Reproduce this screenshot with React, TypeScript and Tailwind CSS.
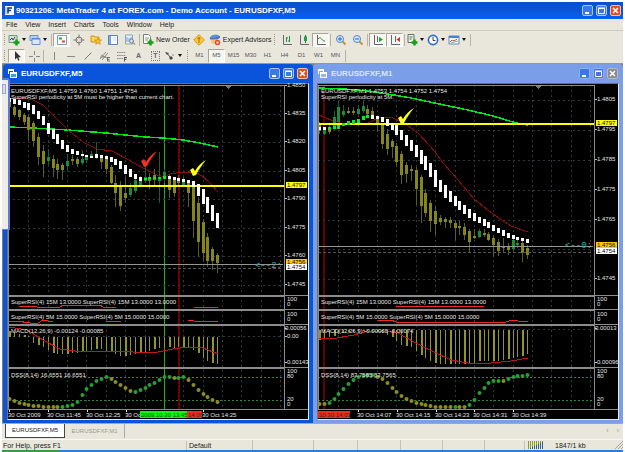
import type { ReactNode } from 'react';
import clsx from 'clsx';

type Range = [number, number];
type Point = [number, number];

interface Candle {
  body: Range;
  wick: Range;
  up?: boolean;
}

interface AxisLabel {
  y: number;
  text: string;
  mark?: 'yellow' | 'amber' | 'white';
}

interface ChartData {
  grid: number[];
  price: AxisLabel[];
  header: string;
  note: string;
  trend: Range[];
  trendUp: number[];
  candles: Candle[];
  average: Point[];
  band: Point[];
  level: number;
  bid: number[];
  marker: { y: number; text: string };
  ticks: { x: number; y: number; color: string }[];
  vlines: { x: number; width: number; color: string }[];
  rsi15: Point[][];
  rsi5: Point[][];
  macd: { text: string; zero: number; bars: number[]; signal: Point[]; labels: AxisLabel[] };
  dss: { text: string; dots: number[]; up: number[] };
  times: { x: number; text: string }[];
  timeMarks: { x: number; width: number; text: string; color: string }[];
}

const STEP = 4.84;
const barX = (i: number) => Math.round(1 + i * STEP);
const c = (b0: number, b1: number, w0 = b0, w1 = b1, up = false): Candle => ({ body: [b0, b1], wick: [w0, w1], up });

const m5: ChartData = {
  grid: [29, 57, 86, 114, 143, 171, 200],
  price: [
    { y: 1, text: '1.4850' },
    { y: 29, text: '1.4835' },
    { y: 57, text: '1.4820' },
    { y: 86, text: '1.4805' },
    { y: 114, text: '1.4790' },
    { y: 143, text: '1.4775' },
    { y: 171, text: '1.4760' },
    { y: 200, text: '1.4745' },
    { y: 101, text: '1.4797', mark: 'yellow' },
    { y: 178, text: '1.4756', mark: 'amber' },
    { y: 183, text: '1.4754', mark: 'white' },
  ],
  header: 'EURUSDFXF,M5  1.4759 1.4760 1.4751 1.4754',
  note: 'SuperRSI periodicity at 5M must be higher than current chart.',
  trend: [
    [13, 17], [14, 19], [15, 20], [17, 23], [18, 25], [20, 29], [26, 34], [31, 40], [38, 49], [44, 54], [49, 59],
    [55, 64], [60, 67], [64, 69], [66, 70], [69, 71], [70, 72], [71, 73], [69, 73], [70, 73], [71, 74], [72, 77],
    [74, 80], [76, 84], [80, 89], [84, 92], [89, 94], [92, 96], [93, 95], [92, 94], [92, 94], [92, 94], [91, 94],
    [91, 94], [92, 95], [93, 96], [94, 97], [95, 98], [96, 102], [99, 111], [104, 119], [112, 128], [120, 136], [128, 143],
  ],
  trendUp: [28, 29, 30, 31, 32],
  candles: [
    c(16, 22), c(22, 30, 20, 32), c(25, 32, 24, 35), c(30, 37, 28, 40), c(32, 45, 30, 55), c(38, 56, 36, 62),
    c(52, 72, 48, 80), c(66, 79, 60, 92), c(72, 76, 64, 80, true), c(74, 83, 70, 92), c(79, 85, 74, 94), c(80, 85, 78, 95),
    c(76, 81, 69, 85, true), c(74, 76, 70, 80), c(74, 79, 72, 82), c(74, 78, 65, 80, true), c(72, 75, 70, 78, true),
    c(69, 71, 66, 73, true), c(70, 72, 57, 74, true), c(72, 77, 70, 84), c(74, 84, 72, 89), c(82, 98, 80, 99),
    c(98, 108, 90, 122), c(102, 121, 96, 126), c(108, 113, 92, 118), c(103, 110, 98, 112, true), c(95, 106, 92, 108, true),
    c(95, 100, 91, 102, true), c(92, 96, 78, 98, true), c(94, 96, 88, 104), c(90, 95, 84, 100), c(93, 96, 67, 118, true),
    c(87, 94, 84, 98, true), c(92, 105, 90, 113), c(95, 108, 92, 112), c(94, 98, 90, 101), c(95, 100, 92, 102, true),
    c(97, 108, 96, 122), c(102, 136, 100, 153), c(118, 157, 112, 172), c(137, 168, 134, 175), c(152, 176, 148, 182),
    c(164, 176, 162, 185), c(170, 178, 168, 188),
  ],
  average: [[1, 42], [25, 43], [60, 45], [98, 48], [137, 52], [156, 53], [175, 55], [192, 58], [210, 62]],
  band: [
    [4, 14], [15, 13], [25, 15], [35, 20], [49, 34], [60, 45], [75, 57], [89, 64], [104, 66], [119, 74], [135, 83],
    [149, 90], [157, 92], [162, 89], [175, 87], [187, 87], [194, 91], [201, 97], [210, 107],
  ],
  level: 101,
  bid: [179, 183],
  marker: { y: 183, text: '<--2:' },
  ticks: [
    { x: 133, y: 66, color: '#f03020' },
    { x: 182, y: 75, color: '#ffff20' },
  ],
  vlines: [
    { x: 156, width: 1, color: '#1fae1f' },
    { x: 170, width: 2, color: '#700000' },
  ],
  rsi15: [
    [[11, 221], [22, 221], [29, 222], [52, 222], [55, 220], [92, 220], [95, 222], [108, 222]],
    [[186, 222], [196, 222], [210, 222]],
  ],
  rsi5: [
    [[1, 237], [9, 236], [22, 238], [30, 238], [35, 235], [45, 237]],
    [[98, 236], [113, 237]],
    [[180, 235], [192, 237], [210, 236]],
  ],
  macd: {
    text: 'MACD(12,26,9) -0.00124 -0.00085',
    zero: 252,
    bars: [
      246, 247, 249, 250, 251, 258, 260, 262, 265, 268, 269, 269, 269, 268, 268, 267, 266, 265, 264, 264, 266, 267,
      269, 271, 271, 270, 269, 268, 267, 266, 264, 263, 262, 262, 263, 262, 262, 262, 265, 268, 273, 276, 278, 279,
    ],
    signal: [[1, 242], [19, 245], [35, 255], [52, 264], [75, 267], [102, 266], [125, 267], [145, 268], [165, 264], [179, 262], [195, 263], [210, 269]],
    labels: [
      { y: 244, text: '0.00056' },
      { y: 252, text: '0.00' },
      { y: 278, text: '-0.00143' },
    ],
  },
  dss: {
    text: 'DSS(8,14) 16.6551 16.6551',
    dots: [
      314, 316, 318, 319, 320, 321, 321, 322, 322, 322, 322, 322, 321, 320, 317, 310, 304, 300, 296, 294, 292, 294,
      297, 300, 303, 306, 307, 305, 303, 300, 298, 295, 292, 292, 293, 293, 292, 295, 300, 305, 309, 312, 315, 317,
    ],
    up: [11, 12, 13, 14, 15, 16, 17, 18, 19, 20, 26, 27, 28, 29, 30, 31, 32, 33, 35, 36],
  },
  times: [
    { x: 0, text: '30 Oct 2009' },
    { x: 39, text: '30 Oct 11:45' },
    { x: 78, text: '30 Oct 12:25' },
    { x: 117, text: '30 Oct' },
    { x: 194, text: '30 Oct 14:25' },
  ],
  timeMarks: [
    { x: 132, width: 47, text: '2009.10.30 13:45', color: '#00ff00' },
    { x: 179, width: 15, text: '14:00', color: '#ee2c24' },
  ],
};

const m1: ChartData = {
  grid: [15, 45, 75, 105, 135, 164, 194],
  price: [
    { y: 15, text: '1.4805' },
    { y: 45, text: '1.4795' },
    { y: 75, text: '1.4785' },
    { y: 105, text: '1.4775' },
    { y: 135, text: '1.4765' },
    { y: 194, text: '1.4745' },
    { y: 39, text: '1.4797', mark: 'yellow' },
    { y: 161, text: '1.4756', mark: 'amber' },
    { y: 167, text: '1.4754', mark: 'white' },
  ],
  header: 'EURUSDFXF,M1  1.4753 1.4754 1.4752 1.4754',
  note: 'SuperRSI periodicity at 5M.',
  trend: [
    [42, 45], [42, 45], [42, 45], [41, 44], [40, 44], [38, 41], [36, 40], [35, 39], [34, 38], [31, 35], [30, 33],
    [30, 34], [31, 34], [32, 37], [34, 41], [38, 45], [40, 50], [45, 55], [50, 61], [55, 66], [60, 72], [65, 79],
    [71, 85], [78, 92], [85, 102], [95, 107], [100, 113], [106, 117], [111, 121], [116, 125], [120, 129], [124, 133],
    [128, 136], [132, 138], [134, 141], [137, 143], [140, 146], [143, 148], [145, 151], [148, 153], [150, 154],
    [152, 155], [153, 156], [154, 158],
  ],
  trendUp: [2, 3, 4, 5, 6, 7, 8, 9, 10],
  candles: [
    c(40, 46, 37, 49), c(45, 49, 42, 50, true), c(43, 47, 39, 49), c(32, 42, 26, 45, true), c(22, 37, 16, 39, true),
    c(26, 30, 20, 32, true), c(26, 28, 22, 29), c(26, 28, 22, 30), c(24, 29, 20, 30, true), c(21, 26, 16, 28, true),
    c(24, 29, 20, 30), c(26, 31, 22, 34), c(34, 38, 32, 47), c(40, 59, 38, 64), c(49, 64, 44, 70), c(56, 62, 54, 73),
    c(61, 77, 58, 82), c(69, 90, 66, 99), c(80, 89, 77, 98), c(84, 86, 80, 96), c(85, 104, 82, 120), c(92, 121, 90, 138),
    c(108, 128, 104, 132), c(118, 136, 115, 147), c(126, 139, 122, 150), c(133, 137, 130, 140), c(134, 137, 132, 143),
    c(135, 138, 132, 143), c(138, 143, 135, 155), c(141, 143, 136, 150), c(142, 150, 138, 155), c(146, 157, 144, 168),
    c(151, 153, 144, 154), c(146, 152, 144, 153, true), c(148, 150, 144, 152), c(149, 155, 147, 156), c(153, 160, 150, 172),
    c(157, 166, 154, 171), c(161, 163, 153, 167), c(162, 165, 158, 170), c(155, 164, 151, 166, true),
    c(158, 160, 154, 163, true), c(158, 168, 155, 177), c(163, 170, 160, 174),
  ],
  average: [[1, 3], [26, 4], [50, 6], [76, 10], [93, 13], [126, 20], [150, 25], [175, 31], [198, 38], [210, 40]],
  band: [
    [1, 30], [13, 35], [30, 40], [50, 38], [60, 33], [73, 32], [86, 38], [100, 48], [113, 62], [126, 79], [140, 95],
    [156, 114], [175, 129], [193, 141], [210, 147],
  ],
  level: 39,
  bid: [161, 167],
  marker: { y: 163, text: '<--0:' },
  ticks: [{ x: 80, y: 23, color: '#ffff20' }],
  vlines: [{ x: 5, width: 2, color: '#600000' }],
  rsi15: [[[78, 221], [93, 221], [106, 221], [166, 222], [210, 222]]],
  rsi5: [[[60, 235], [73, 235], [78, 237], [160, 237], [186, 238], [193, 235], [200, 236], [210, 236]]],
  macd: {
    text: 'MACD(12,26,9) -0.00065 -0.00074',
    zero: 245,
    bars: [
      255, 253, 252, 251, 249, 248, 247, 247, 246, 246, 246, 246, 246, 248, 250, 252, 256, 260, 261, 262, 266, 270,
      273, 276, 278, 279, 279, 279, 279, 279, 279, 279, 278, 276, 276, 276, 276, 276, 275, 274, 273, 272, 271, 269,
    ],
    signal: [[1, 253], [13, 254], [36, 250], [50, 246], [65, 246], [80, 248], [96, 257], [116, 267], [133, 275], [150, 278], [173, 278], [193, 276], [210, 273]],
    labels: [
      { y: 244, text: '0.00013' },
      { y: 278, text: '-0.00096' },
    ],
  },
  dss: {
    text: 'DSS(8,14) 83.7565 83.7565',
    dots: [
      319, 319, 318, 314, 309, 304, 299, 295, 292, 291, 290, 290, 292, 294, 298, 303, 307, 311, 314, 316, 318, 319,
      320, 321, 322, 322, 322, 322, 322, 322, 322, 320, 315, 308, 303, 298, 296, 296, 296, 294, 292, 291, 291, 290,
    ],
    up: [2, 3, 4, 5, 6, 7, 8, 9, 10, 11, 28, 31, 32, 33, 34, 35, 36, 37, 39, 40, 41, 42, 43],
  },
  times: [
    { x: 39, text: '30 Oct 14:07' },
    { x: 78, text: '30 Oct 14:15' },
    { x: 117, text: '30 Oct 14:23' },
    { x: 155, text: '30 Oct 14:31' },
    { x: 194, text: '30 Oct 14:39' },
  ],
  timeMarks: [{ x: 0, width: 32, text: '10:30 14:01', color: '#ee2c24' }],
};

const toPoints = (pts: Point[]) => pts.map(p => p.join(',')).join(' ');

interface PaneProps {
  top: number;
  className: string;
  data: ChartData;
  axis: ReactNode;
  children: ReactNode;
}

// All panes of a chart share one coordinate space; `top` is where this pane starts in it.
function Pane({ top, className, data, axis, children }: PaneProps) {
  return (
    <div className={clsx('flex', className)}>
      <div className="min-w-0 flex-1 border-x border-t border-[#8c8c8c]">
        <svg className="block h-full w-full" shapeRendering="crispEdges">
          <g transform={`translate(-1 ${-top})`}>
            {Array.from({ length: 14 }, (_, k) => (
              <line key={k} x1={barX((k + 1) * 4) + 0.5} x2={barX((k + 1) * 4) + 0.5} y1="0" y2="330" stroke="#30373e" strokeDasharray="2 3" />
            ))}
            {data.vlines.map(v => (
              <rect key={v.x} x={v.x} y="0" width={v.width} height="330" fill={v.color} />
            ))}
            {children}
          </g>
        </svg>
      </div>
      <svg className="block h-full w-[23px] shrink-0 overflow-visible">
        <g transform={`translate(0 ${-top})`} fill="#e4e4e4" fontSize="6">
          {axis}
        </g>
      </svg>
    </div>
  );
}

const markColor = { yellow: '#ffff00', amber: '#ffc800', white: '#ffffff' };

function AxisText({ y, text, mark }: AxisLabel) {
  return (
    <>
      {mark ? <rect x="1" y={y - 3} width="21" height="6" fill={markColor[mark]} /> : <rect x="0" y={y} width="2" height="1" fill="#bbb" />}
      <text x={text.length > 6 ? 0 : 2} y={y + 2} fill={mark ? '#000' : '#e4e4e4'}>{text}</text>
    </>
  );
}

function RsiPane({ top, base, className, label, lines, data }: { top: number; base: number; className: string; label: string; lines: Point[][]; data: ChartData }) {
  return (
    <Pane
      top={top}
      className={className}
      data={data}
      axis={
        <>
          <text x="2" y={base - 2}>100</text>
          <text x="2" y={base + 3}>0</text>
        </>
      }
    >
      {lines.map((l, i) => (
        <polyline key={i} points={toPoints(l)} fill="none" stroke="#f02a20" />
      ))}
      <text x="3" y={base} fill="#e4e4e4" fontSize="6">{label}</text>
    </Pane>
  );
}

function Chart({ data }: { data: ChartData }) {
  const { macd, dss } = data;
  return (
    <div className="bg-black pt-px font-['Liberation_Sans',sans-serif]">
      <Pane top={1} className="h-[210px]" data={data} axis={data.price.map(p => <AxisText key={p.text} {...p} />)}>
        {data.grid.map(y => (
          <line key={y} x1="0" x2="100%" y1={y + 0.5} y2={y + 0.5} stroke="#30373e" strokeDasharray="2 3" />
        ))}
        <polyline points={toPoints(data.average)} fill="none" stroke="#00e818" strokeWidth="1.5" />
        <polyline points={toPoints(data.band)} fill="none" stroke="#8c0c0c" />
        {data.candles.map((k, i) => {
          const color = k.up ? '#1f8a38' : '#85851f';
          return (
            <g key={i}>
              <rect x={barX(i)} y={k.wick[0]} width="1" height={k.wick[1] - k.wick[0]} fill={k.up ? '#1d5c40' : '#5c5c28'} />
              <rect x={barX(i) - 1} y={k.body[0]} width="3" height={k.body[1] - k.body[0]} fill={color} />
            </g>
          );
        })}
        {data.bid.map((y, i) => (
          <line key={y} x1="0" x2="100%" y1={y + 0.5} y2={y + 0.5} stroke={i ? '#555' : '#96968c'} strokeDasharray={i ? '3 2' : undefined} />
        ))}
        <rect x="0" y={data.level - 1} width="101%" height="2" fill="#ffff00" />
        {data.trend.map(([a, b], i) => (
          <rect key={i} x={barX(i) - 1} y={a} width="3" height={b - a} fill={data.trendUp.includes(i) ? '#00f020' : '#fff'} />
        ))}
        {data.ticks.map(t => (
          <path key={t.x} transform={`translate(${t.x} ${t.y})`} d="M0 10 L3 8 L5 11 C8 6 11 3 16 0 C12 5 9 9 6 15 L3 16 Z" fill={t.color} shapeRendering="auto" />
        ))}
        <path d="M217 1 h6 l-3 3 z" fill="#777" />
        <g fontSize="6" fill="#e4e4e4">
          <text x="3" y="8">{data.header}</text>
          <text x="3" y="14">{data.note}</text>
        </g>
        <text x="247" y={data.marker.y} fontSize="9" fill="#2cb4b4" fontFamily="Liberation Mono, monospace">{data.marker.text}</text>
      </Pane>
      <RsiPane top={212} base={219} className="h-[14px] border-t border-[#8c8c8c]" label="SuperRSI(4) 15M 13.0000  SuperRSI(4) 15M 13.0000 13.0000" lines={data.rsi15} data={data} />
      <RsiPane top={226} base={234} className="h-[15px] border-t border-[#8c8c8c]" label="SuperRSI(4) 5M 15.0000  SuperRSI(4) 5M 15.0000 15.0000" lines={data.rsi5} data={data} />
      <Pane top={241} className="h-[43px] border-t border-[#8c8c8c]" data={data} axis={macd.labels.map(l => <AxisText key={l.text} {...l} />)}>
        <line x1="0" x2="100%" y1={macd.zero - 0.5} y2={macd.zero - 0.5} stroke="#30373e" strokeDasharray="2 3" />
        {macd.bars.map((y, i) => (
          <rect key={i} x={barX(i)} y={Math.min(y, macd.zero)} width={i % 3 ? 1 : 2} height={Math.abs(y - macd.zero)} fill="#94942e" />
        ))}
        <polyline points={toPoints(macd.signal)} fill="none" stroke="#c01818" />
        <text x="3" y="248" fill="#e4e4e4" fontSize="6">{macd.text}</text>
      </Pane>
      <Pane
        top={284}
        className="h-[42px] border-t border-[#8c8c8c]"
        data={data}
        axis={
          <>
            <text x="2" y="289">100</text>
            <text x="2" y="294">80</text>
            <text x="2" y="317">20</text>
            <text x="2" y="322">0</text>
          </>
        }
      >
        {[292, 315].map(y => (
          <line key={y} x1="0" x2="100%" y1={y + 0.5} y2={y + 0.5} stroke="#2f8a2f" strokeDasharray="2 2" />
        ))}
        {dss.dots.map((y, i) => (
          <circle key={i} cx={barX(i) + 0.5} cy={y} r="2" fill={dss.up.includes(i) ? '#2a9c3a' : '#8c8c26'} shapeRendering="auto" />
        ))}
        <text x="3" y="292" fill="#e4e4e4" fontSize="6">{dss.text}</text>
      </Pane>
      <svg className="block h-[10px] w-full border-t border-[#8c8c8c]" fontSize="6">
        {data.times.map(t => (
          <g key={t.x} fill="#e4e4e4">
            <rect x={t.x + 1} y="0" width="1" height="2" />
            <text x={t.x} y="7">{t.text}</text>
          </g>
        ))}
        {data.timeMarks.map(t => (
          <g key={t.x}>
            <rect x={t.x} y="1" width={t.width} height="7" fill={t.color} />
            <text x={t.x + 1} y="7" fill="#1c2c10">{t.text}</text>
          </g>
        ))}
      </svg>
    </div>
  );
}

function CaptionButtons({ muted = false }: { muted?: boolean }) {
  const base = 'flex size-[11px] items-center justify-center rounded-[2px] border';
  return (
    <div className="flex gap-[3px]">
      <button aria-label="Minimize" className={clsx(base, 'bg-[#3b78e6]', muted ? 'border-[#8fb0f0]' : 'border-[#a8c4f8]')}>
        <svg className="size-[9px]" viewBox="0 0 9 9"><path d="M2 6h4v2H2z" fill="#fff" /></svg>
      </button>
      <button aria-label="Maximize" className={clsx(base, 'bg-[#3b78e6]', muted ? 'border-[#8fb0f0]' : 'border-[#a8c4f8]')}>
        <svg className="size-[9px]" viewBox="0 0 9 9"><path d="M1.5 2.5h6v5h-6zM1 2h7" fill="none" stroke="#fff" /></svg>
      </button>
      <button aria-label="Close" className={clsx(base, muted ? 'border-[#b8b8c0] bg-[#8e8e92]' : 'border-[#f4c0a8] bg-[#e0501e]')}>
        <svg className="size-[9px]" viewBox="0 0 9 9"><path d="M2 2l5 5M7 2l-5 5" stroke="#fff" strokeWidth="1.5" /></svg>
      </button>
    </div>
  );
}

function ChartWindow({ title, active = false, data }: { title: string; active?: boolean; data: ChartData }) {
  return (
    <section className={clsx('min-w-0 rounded-t-[4px] px-1 pb-[3px]', active ? 'bg-[#0a54dc]' : 'bg-[#7a9ee8]')}>
      <header className="flex h-[19px] items-center pr-px">
        <svg className="mr-1 ml-px size-[9px] shrink-0" viewBox="0 0 9 9">
          <path d="M0 0h6v2H0zM0 2h1v3H0zM5 2h1v1H5z" fill="#fff" />
          <path d="M2 3h7v6H2z" fill="#fff" />
          <path d="M3 5h5v3H3z" fill={active ? '#5a90ea' : '#9bb6ee'} />
        </svg>
        <h2 className={clsx('flex-1 truncate text-[8px] leading-[10px] font-bold', active ? 'text-white' : 'text-[#dce6fa]')}>{title}</h2>
        <CaptionButtons muted={!active} />
      </header>
      <div className="border border-t-[#707070] border-r-[#e8e8e0] border-b-[#e8e8e0] border-l-[#707070]">
        <Chart data={data} />
      </div>
    </section>
  );
}

function Icon({ children }: { children: ReactNode }) {
  return <svg className="size-3 shrink-0" viewBox="0 0 12 12" fill="none">{children}</svg>;
}

const plus = <path d="M5.5 8.5h6M8.5 5.500v6" stroke="#16a016" strokeWidth="2.500" />;

const icons: Record<string, ReactNode> = {
  newChart: <><path d="M1 1.5h8v7H1z" fill="#d4e4d4" stroke="#6f9a7c" /><path d="M2 6l2-2 1 2 2-3" stroke="#348" />{plus}</>,
  profiles: <><path d="M1 1.5h8v5H1z" fill="#b8d0ee" stroke="#6a92c8" /><path d="M3 4.5h8v6H3z" fill="#dbe8f8" stroke="#6a92c8" /><path d="M3 5h8" stroke="#4a7fd0" /></>,
  market: <><path d="M1.5 1.5h9v9h-9z" fill="#fff" stroke="#7f9fbf" /><path d="M3 3.5h3v2H3z" fill="#2a9c4a" /><path d="M6 6.5h3v2H6z" fill="#d84838" /></>,
  data: <><circle cx="6" cy="6" r="3" stroke="#777" /><path d="M6 0.5v4M6 7.5v4M.5 6h4M7.5 6h4" stroke="#777" /></>,
  navigator: <><path d="M1 2h3l1 1h4v5H1z" fill="#ffd75a" stroke="#c89018" /><path d="M8 4l1 2h2.500l-2 1.700.8 2.600L8 9l-2.300 1.300.8-2.600-2-1.700H7z" fill="#ffc428" stroke="#c07c10" strokeWidth=".6" /></>,
  terminal: <><path d="M1.500 1.500h9v9h-9z" fill="#fff" stroke="#5a84b8" /><path d="M2 2h2v8H2z" fill="#7ba6dc" /><path d="M5.500 4h4M5.500 6h4" stroke="#cdd8e6" /></>,
  tester: <><path d="M1.500 1h7v9h-7z" fill="#e8f0fa" stroke="#8aa4c4" /><path d="M3 3v5M5 4v4M7 3v4" stroke="#8098b8" /><circle cx="7.500" cy="7" r="2" fill="#cfe2f6" stroke="#6484a8" /><path d="M9 8.500l2 2" stroke="#c89830" strokeWidth="1.500" /></>,
  order: <><path d="M1.500.5h5l2 2v7h-7z" fill="#fff" stroke="#6a8a6a" /><path d="M3 4h4M3 6h3" stroke="#7a9a7a" />{plus}</>,
  meta: <><path d="M6 .7L11.300 6 6 11.300.7 6z" fill="#ffcc30" stroke="#d89018" /><path d="M6 3v6M4.500 5L6 3.500 7.500 5" stroke="#a06c10" /></>,
  expert: <><path d="M1 4c1-3 8-4 10-1L7 6z" fill="#5a9ae0" stroke="#2c64a8" strokeWidth=".7" /><circle cx="5" cy="7" r="3" fill="#f8c860" /><path d="M1 4.500c3 1 6 0 10-1.500" stroke="#3c78c4" strokeWidth="1.500" /><circle cx="8.500" cy="8.500" r="2.700" fill="#e04828" /><path d="M7.500 7.500h2v2h-2z" fill="#fff" /></>,
  bars: <><path d="M2.500 1v9.500H11" stroke="#667" /><path d="M5.500 3v5M5.500 4H7M8.500 2v6M7 7h1.500" stroke="#2a8a4a" /></>,
  candles: <><path d="M2.500 1v9.500H11" stroke="#667" /><path d="M7.500 1v8" stroke="#147a34" /><path d="M6 2.500h3v4.500H6z" fill="#20a048" /></>,
  line: <><path d="M2.500 1v9.500H11" stroke="#667" /><path d="M3 5c3-4 4 3 7 2" stroke="#2a8a4a" /></>,
  zoomIn: <><path d="M7.500 7.500l3 3" stroke="#c8962a" strokeWidth="2" /><circle cx="5" cy="5" r="3.500" fill="#d8eaff" stroke="#4a86d0" /><path d="M3 5h4M5 3v4" stroke="#2460b0" /></>,
  zoomOut: <><path d="M7.500 7.500l3 3" stroke="#c8962a" strokeWidth="2" /><circle cx="5" cy="5" r="3.500" fill="#d8eaff" stroke="#4a86d0" /><path d="M3 5h4" stroke="#2460b0" /></>,
  scroll: <><path d="M2.500 1v9.500H11M5.500 2v6" stroke="#667" /><path d="M7 3l4 2.500L7 8z" fill="#18a030" /></>,
  shift: <><path d="M2.500 1v9.500H11M6.500 2v6" stroke="#667" /><path d="M11 3L7.500 5.500 11 8z" fill="#c83828" /></>,
  indicators: <><path d="M2 .5h6v8H2z" fill="#e8f0e8" stroke="#5a7a5a" /><path d="M3.500 3h3M3.500 5h2" stroke="#567" />{plus}</>,
  clock: <><circle cx="6" cy="6" r="4.600" fill="#fff" stroke="#2c6cd0" strokeWidth="1.600" /><path d="M6 3v3.500h2.500" stroke="#345" /></>,
  template: <><path d="M1 2h10v8H1z" fill="#fff" stroke="#5a8ac8" /><path d="M1 3h10" stroke="#4a80d0" strokeWidth="2" /><path d="M2 8l2-2 2 1 3-2" stroke="#c04838" /><path d="M3 9l3-1 4-1" stroke="#3a9a4a" strokeWidth=".7" /></>,
  cursor: <path d="M4 1v8.500l2-1.800 1.200 3 1.300-.6L7.300 7.300H10z" fill="#333" />,
  cross: <path d="M6.500 1v4M6.500 8v4M1 6.500h4M8 6.500h4" stroke="#888" />,
  vertical: <path d="M6.500 2v8" stroke="#888" />,
  horizontal: <path d="M2 6.500h8" stroke="#888" />,
  trend: <path d="M2.500 9.500l7-7" stroke="#777" />,
  channel: <><path d="M1 9l6-7M3 10l6-7M2 5l6 3M1 7h6" stroke="#777" strokeWidth=".8" /><path d="M8.500 7v4M8.500 7.500H11M8.500 9.300h2M8.500 11H11" stroke="#555" strokeWidth=".8" /></>,
  fibo: <><path d="M1 2.500h9M1 5.500h9M1 8.500h6" stroke="#888" strokeDasharray="1.500 .7" /><path d="M8.500 7v4.500M8.500 7.500H11M8.500 9.300h2" stroke="#555" /></>,
  arrows: <><path d="M1 2l4 1-2 2z" fill="#444" /><path d="M3 3l3 4" stroke="#555" /><path d="M7 6l2 2-2 2-2-2z" fill="#444" /><path d="M8 5h2" stroke="#888" /></>,
};

interface ToolProps {
  icon: string;
  label: string;
  text?: string;
  menu?: boolean;
  pressed?: boolean;
}

function Tool({ icon, label, text, menu, pressed }: ToolProps) {
  return (
    <button
      aria-label={label}
      className={clsx(
        'flex h-[14px] shrink-0 items-center whitespace-nowrap',
        text ? 'gap-[2px] px-px' : menu ? 'w-[21px]' : 'w-[17px] justify-center',
        pressed && 'border border-t-[#a8a598] border-r-white border-b-white border-l-[#a8a598] bg-[#f6f5f0]',
      )}
    >
      <Icon>{icons[icon]}</Icon>
      {text}
      {menu && <svg className="ml-[2px] h-[3px] w-[4px]" viewBox="0 0 4 3"><path d="M0 0h4L2 3z" fill="#111" /></svg>}
    </button>
  );
}

const Grip = () => <span className="mx-[2px] h-[11px] w-[2px] shrink-0 border-l border-dotted border-[#9a978a]" />;
const Sep = () => <span className="mx-px h-[12px] w-px shrink-0 bg-[#b8b5a6]" />;

const periods = ['M1', 'M5', 'M15', 'M30', 'H1', 'H4', 'D1', 'W1', 'MN'];

export default function App() {
  return (
    <div className="bg-white pt-[2px] pr-[2px] pl-[2px] font-['Liberation_Sans',sans-serif] text-[7px] leading-[9px] text-[#222]">
      <div className="bg-[#e9e7dc]">
        <header className="flex h-[17px] items-center bg-linear-to-b from-[#0a50cc] via-[#0b55d8] to-[#0560f6] pr-[2px] pl-[3px]">
          <svg className="mr-[2px] size-[9px] shrink-0" viewBox="0 0 9 9">
            <path d="M0 0h9v9H0z" fill="#f4f8ff" />
            <path d="M3 7.500V2h4M3 4.500h3" fill="none" stroke="#12356e" strokeWidth="1.500" />
            <path d="M1 1v7" stroke="#88a8d8" />
          </svg>
          <h1 className="flex-1 truncate text-[8px] leading-[10px] font-bold text-white">
            90321206: MetaTrader 4 at FOREX.com - Demo Account - EURUSDFXF,M5
          </h1>
          <CaptionButtons />
        </header>

        <nav className="flex h-[12px] items-center gap-2 border-b border-[#cfccbd] pl-1">
          {['File', 'View', 'Insert', 'Charts', 'Tools', 'Window', 'Help'].map(m => (
            <button key={m}>{m}</button>
          ))}
        </nav>

        <div className="flex h-[17px] items-center">
          <Grip />
          <Tool icon="newChart" label="New Chart" menu />
          <Tool icon="profiles" label="Profiles" menu />
          <Sep />
          <Tool icon="market" label="Market Watch" pressed />
          <Tool icon="data" label="Data Window" />
          <Tool icon="navigator" label="Navigator" />
          <Tool icon="terminal" label="Terminal" />
          <Tool icon="tester" label="Strategy Tester" />
          <Sep />
          <Tool icon="order" label="New Order" text="New Order" />
          <Tool icon="meta" label="MetaEditor" />
          <Tool icon="expert" label="Expert Advisors" text="Expert Advisors" />
          <Grip />
          <Tool icon="bars" label="Bar Chart" />
          <Tool icon="candles" label="Candlesticks" />
          <Tool icon="line" label="Line Chart" pressed />
          <Sep />
          <Tool icon="zoomIn" label="Zoom In" />
          <Tool icon="zoomOut" label="Zoom Out" />
          <Sep />
          <Tool icon="scroll" label="Auto Scroll" pressed />
          <Tool icon="shift" label="Chart Shift" pressed />
          <Sep />
          <Tool icon="indicators" label="Indicators" menu />
          <Tool icon="clock" label="Periods" menu />
          <Tool icon="template" label="Templates" menu />
          <Sep />
        </div>

        <div className="flex h-[15px] items-center">
          <Grip />
          <Tool icon="cursor" label="Cursor" pressed />
          <Tool icon="cross" label="Crosshair" />
          <Sep />
          <Tool icon="vertical" label="Vertical Line" />
          <Tool icon="horizontal" label="Horizontal Line" />
          <Tool icon="trend" label="Trendline" />
          <Tool icon="channel" label="Equidistant Channel" />
          <Tool icon="fibo" label="Fibonacci" />
          <button className="w-[17px] font-bold text-[#666]">A</button>
          <button className="flex w-[17px] justify-center text-[#666]">
            <span className="w-[9px] border border-dotted border-[#777] leading-[8px] font-bold">T</span>
          </button>
          <Tool icon="arrows" label="Arrows" menu />
          <Grip />
          {periods.map(p => (
            <button
              key={p}
              className={clsx(
                'h-[14px] w-[17px] text-[6px] text-[#555]',
                p === 'M5' && 'border border-t-[#a8a598] border-r-white border-b-white border-l-[#a8a598] bg-[#f6f5f0]',
              )}
            >
              {p}
            </button>
          ))}
          <Sep />
        </div>

        <main className="relative grid grid-cols-2 border-t border-[#9a978a] bg-[#808080] pl-px">
          <ChartWindow title="EURUSDFXF,M5" active data={m5} />
          <ChartWindow title="EURUSDFXF,M1" data={m1} />
          {/* collapsed side bar sliding over the first chart */}
          <aside className="absolute top-[14px] left-0 h-[152px] w-[8px] rounded-tr-[3px] border-t-2 border-r-2 border-b border-[#5a7cd8] bg-[#efede4] pt-[4px]">
            <button aria-label="Close panel" className="block h-[10px] w-[4px] border border-[#9aa8c0] bg-[#d8dce6]" />
          </aside>
        </main>

        <div className="flex h-[16px] items-start border-t border-[#aaa79a]">
          <button className="ml-[3px] h-[14px] w-[60px] border border-t-0 border-[#444] bg-white text-[6px]">EURUSDFXF,M5</button>
          <button className="h-[14px] w-[60px] border-r border-[#aaa] text-[6px] text-[#9a978a]">EURUSDFXF,M1</button>
          <div className="ml-auto flex h-[12px] items-center gap-[8px] pr-[4px] text-[#999]">
            <button aria-label="Previous">‹</button>
            <button aria-label="Next">›</button>
          </div>
        </div>

        <footer className="flex h-[11px] items-center border-t border-[#f8f7f2] whitespace-nowrap">
          <span className="w-[184px] pl-px">For Help, press F1</span>
          <span className="w-[66px] border-l border-[#c4c1b2] pl-[2px]">Default</span>
          <span className="h-full flex-1 border-l border-[#c4c1b2]" />
          <span className="h-full w-[44px] border-l border-[#c4c1b2]" />
          <span className="h-full w-[43px] border-l border-[#c4c1b2]" />
          <span className="h-full w-[42px] border-l border-[#c4c1b2]" />
          <span className="h-full w-[42px] border-l border-[#c4c1b2]" />
          <span className="h-full w-[40px] border-l border-[#c4c1b2]" />
          <div className="flex w-[99px] items-center gap-3 border-l border-[#c4c1b2] pl-[3px]">
            <svg className="h-[8px] w-[15px]" viewBox="0 0 15 8" shapeRendering="crispEdges">
              {[0, 2, 4, 6, 8, 10, 12, 14].map((x, i) => (
                <g key={x}>
                  <rect x={x} y="0" width="1" height={8 - i} fill="#8c9c28" />
                  <rect x={x} y={8 - i} width="1" height={i} fill="#2c5c9c" />
                </g>
              ))}
            </svg>
            1847/1 kb
            <svg className="ml-auto size-[8px]" viewBox="0 0 8 8"><path d="M0 8l8-8M3 8l5-5M6 8l2-2" stroke="#aaa79a" /></svg>
          </div>
        </footer>
      </div>
      <div className="flex h-[2px] bg-[#2f7be0]">
        <span className="w-[57px] bg-[#3f9a3f]" />
      </div>
    </div>
  );
}
